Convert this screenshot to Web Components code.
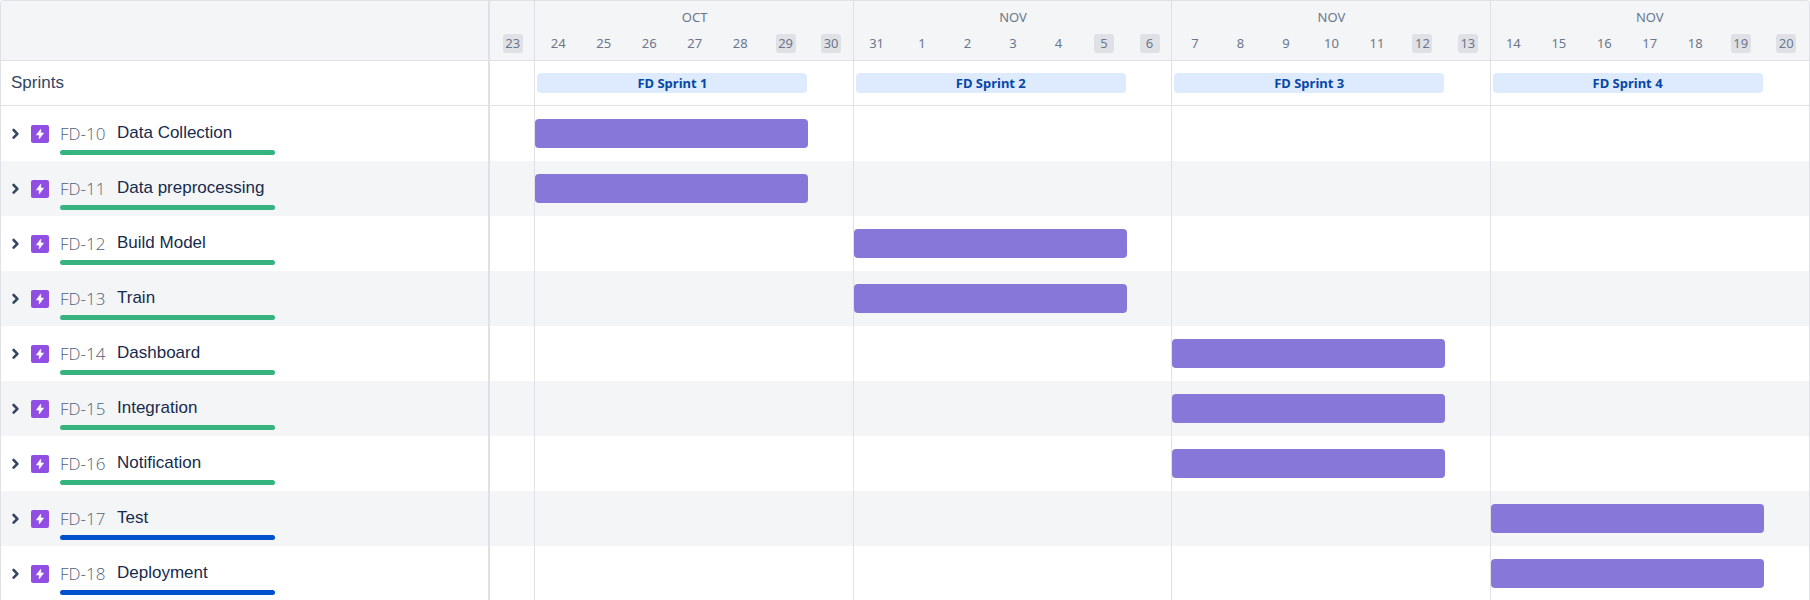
<!DOCTYPE html>
<html lang="en">
<head>
<meta charset="utf-8">
<title>Roadmap</title>
<style>
  html { scrollbar-width: none; }
  body {
    margin: 0;
    height: 100vh;
    overflow: hidden;
    background: #fff;
    color: #172b4d;
    font-family: "Liberation Sans", Arial, sans-serif;
  }
</style>
</head>
<body>
<road-map>
  <road-header slot="header">
    <road-week start="1" span="1" days="23" off="23"></road-week>
    <road-week start="2" month="OCT" span="7" days="24 25 26 27 28 29 30" off="29 30"></road-week>
    <road-week start="9" month="NOV" span="7" days="31 1 2 3 4 5 6" off="5 6"></road-week>
    <road-week start="16" month="NOV" span="7" days="7 8 9 10 11 12 13" off="12 13"></road-week>
    <road-week start="23" month="NOV" span="7" days="14 15 16 17 18 19 20" off="19 20"></road-week>
  </road-header>
  <road-sprints slot="sprints">
    <sprint-chip start="2">FD Sprint 1</sprint-chip>
    <sprint-chip start="9">FD Sprint 2</sprint-chip>
    <sprint-chip start="16">FD Sprint 3</sprint-chip>
    <sprint-chip start="23">FD Sprint 4</sprint-chip>
  </road-sprints>
  <road-epic key="FD-10" start="2">Data Collection</road-epic>
  <road-epic key="FD-11" start="2">Data preprocessing</road-epic>
  <road-epic key="FD-12" start="9">Build Model</road-epic>
  <road-epic key="FD-13" start="9">Train</road-epic>
  <road-epic key="FD-14" start="16">Dashboard</road-epic>
  <road-epic key="FD-15" start="16">Integration</road-epic>
  <road-epic key="FD-16" start="16">Notification</road-epic>
  <road-epic key="FD-17" start="23" state="progress">Test</road-epic>
  <road-epic key="FD-18" start="23" state="progress">Deployment</road-epic>
</road-map>

<script>
const define = (name, html, setup) => {
  const template = document.createElement('template');
  template.innerHTML = html;
  customElements.define(name, class extends HTMLElement {
    constructor() {
      super();
      this.attachShadow({ mode: 'open' }).append(template.content.cloneNode(true));
    }
    connectedCallback() {
      if (setup && !this.ready) { this.ready = true; setup(this, this.shadowRoot); }
    }
  });
};

define('road-map', `
  <style>
    :host {
      --line: #dfe1e6;
      --shade: #f4f5f7;
      --muted: #6b778c;
      --side: 487px;
      --ui: "Noto Sans", "Open Sans", sans-serif;
      display: block;
      border: 1px solid var(--line);
      border-bottom: 0;
      border-radius: 4px 4px 0 0;
      overflow: hidden;
    }
    ::slotted(road-epic:nth-child(even)) { background: var(--shade); }
  </style>
  <slot name="header"></slot>
  <slot name="sprints"></slot>
  <slot></slot>
`);

/* One row: a side cell of fixed width, and a 29-day track ruled by week. */
define('road-track', `
  <style>
    :host { display: grid; grid-template-columns: auto minmax(0, 1fr); }
    .side { width: var(--side); border-right: 2px solid var(--line); display: flex; align-items: center; }
    .days { display: grid; grid-template-columns: repeat(29, minmax(0, 1fr)); align-items: center; }
    i { grid-row: 1; align-self: stretch; border-right: 1px solid var(--line); }
    i:nth-of-type(1) { grid-column: 1; }
    i:nth-of-type(2) { grid-column: 2 / span 7; }
    i:nth-of-type(3) { grid-column: 9 / span 7; }
    i:nth-of-type(4) { grid-column: 16 / span 7; }
  </style>
  <div class="side"><slot name="side"></slot></div>
  <div class="days"><i></i><i></i><i></i><i></i><slot></slot></div>
`);

define('road-header', `
  <style>
    :host { display: block; background: var(--shade); border-bottom: 1px solid var(--line); }
    road-track { height: 59px; }
  </style>
  <road-track><slot></slot></road-track>
`);

define('road-week', `
  <style>
    :host { display: block; grid-row: 1; align-self: start; text-align: center; color: var(--muted);
            font: 13px/20px var(--ui); }
    .month { height: 20px; padding-top: 6px; }
    .row { display: flex; padding-top: 7px; }
    .day { flex: 1 1 0; display: flex; justify-content: center; }
    .day span { width: 20px; height: 19px; line-height: 19px; border-radius: 3px; }
    .off span { background: var(--line); }
  </style>
  <div class="month"></div>
  <div class="row"></div>
`, (el, root) => {
  el.style.gridColumn = el.getAttribute('start') + ' / span ' + el.getAttribute('span');
  root.querySelector('.month').textContent = el.getAttribute('month') || '';
  const off = (el.getAttribute('off') || '').split(' ');
  for (const day of el.getAttribute('days').split(' ')) {
    const box = document.createElement('div');
    box.className = off.includes(day) ? 'day off' : 'day';
    const label = document.createElement('span');
    label.textContent = day;
    box.append(label);
    root.querySelector('.row').append(box);
  }
});

define('road-sprints', `
  <style>
    :host { display: block; border-bottom: 1px solid var(--line); }
    road-track { height: 44px; }
    .label { padding-left: 10px; font-size: 17px; line-height: 20px; color: #344563; }
  </style>
  <road-track><span class="label" slot="side">Sprints</span><slot></slot></road-track>
`);

define('sprint-chip', `
  <style>
    :host { display: block; grid-row: 1; margin: 0 1px 0 2px; height: 20px; border-radius: 4px; background: #deebff;
            color: #0747a6; text-align: center; font: bold 13px/20px var(--ui); }
  </style>
  <slot></slot>
`, el => { el.style.gridColumn = el.getAttribute('start') + ' / span 6'; });

define('road-epic', `
  <style>
    :host { display: block; --state: #36b37e; }
    :host([state="progress"]) { --state: #0052cc; }
    road-track { height: 55px; }
    .side { display: flex; align-items: center; padding-left: 5px; }
    button { width: 20px; height: 20px; padding: 0; border: 0; background: none; color: #344563; cursor: pointer; }
    svg { display: block; }
    .type { margin-left: 5px; }
    .text { margin-left: 11px; padding-top: 8px; width: 215px; }
    .line { display: flex; align-items: flex-start; height: 28px; white-space: nowrap; }
    .key { width: 57px; font: 300 17px/28px "Open Sans", "Noto Sans", sans-serif; color: #505f79; text-decoration: none; }
    .name { font-size: 17px; line-height: 26px; }
    .state { height: 5px; margin-top: 2px; border-radius: 3px; background: var(--state); }
    .bar { grid-row: 1; height: 29px; border-radius: 4px; background: #8777d9; }
  </style>
  <road-track>
    <div class="side" slot="side">
      <button type="button" aria-expanded="false"><svg width="20" height="20" viewBox="0 0 20 20" fill="none" stroke="currentColor" stroke-width="2.6" stroke-linecap="round" stroke-linejoin="round"><path d="M7.6 6 11.4 9.8 7.6 13.6"/></svg></button>
      <svg class="type" width="18" height="18" viewBox="0 0 18 18"><rect width="18" height="18" rx="2" fill="#904ee2"/><path d="M9.8 4v4h2.9L8.2 14v-4H5.3z" fill="#fff" stroke="#fff" stroke-width=".5" stroke-linejoin="round"/></svg>
      <div class="text">
        <div class="line"><a class="key" href="#"></a><span class="name"><slot></slot></span></div>
        <div class="state"></div>
      </div>
    </div>
    <div class="bar"></div>
  </road-track>
`, (el, root) => {
  root.querySelector('.key').textContent = el.getAttribute('key');
  root.querySelector('button').setAttribute('aria-label', 'Expand ' + el.getAttribute('key'));
  root.querySelector('.bar').style.gridColumn = el.getAttribute('start') + ' / span 6';
});
</script>
</body>
</html>
